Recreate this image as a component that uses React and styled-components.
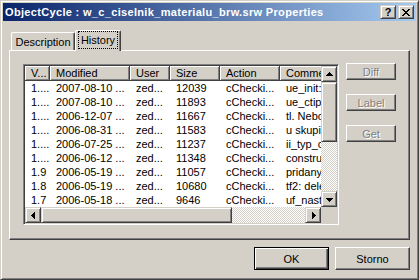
import styled, { createGlobalStyle } from "styled-components";

const GlobalStyle = createGlobalStyle`
  html, body {
    margin: 0;
    padding: 0;
    background: #d4d0c8;
  }
  body {
    font-family: "Liberation Sans", Arial, sans-serif;
    font-size: 11px;
    color: #000;
  }
`;

// classic 3d edges
const raisedScroll = `
  background: #d4d0c8;
  border: 1px solid;
  border-color: #d4d0c8 #404040 #404040 #d4d0c8;
  box-shadow: inset 1px 1px #fff, inset -1px -1px #808080;
`;

const raisedButton = `
  background: #d4d0c8;
  border: 1px solid;
  border-color: #fff #404040 #404040 #fff;
  box-shadow: inset -1px -1px #808080;
`;

const columns = [
  { title: "V...", width: 25 },
  { title: "Modified", width: 80 },
  { title: "User", width: 40 },
  { title: "Size", width: 50 },
  { title: "Action", width: 60 },
  { title: "Comment", width: 110 },
];

const rows = [
  ["1....", "2007-08-10 ...", "zed...", "12039", "cChecki...", "ue_init: zmena"],
  ["1....", "2007-08-10 ...", "zed...", "11893", "cChecki...", "ue_ctipodd"],
  ["1....", "2006-12-07 ...", "zed...", "11667", "cChecki...", "tl. Nebo..."],
  ["1....", "2006-08-31 ...", "zed...", "11583", "cChecki...", "u skupin"],
  ["1....", "2006-07-25 ...", "zed...", "11237", "cChecki...", "ii_typ_cis"],
  ["1....", "2006-06-12 ...", "zed...", "11348", "cChecki...", "constructor"],
  ["1.9", "2006-05-19 ...", "zed...", "11057", "cChecki...", "pridany..."],
  ["1.8", "2006-05-19 ...", "zed...", "10680", "cChecki...", "tf2: delete"],
  ["1.7", "2006-05-18 ...", "zed...", "9646", "cChecki...", "uf_nastav"],
];

const Window = styled.div`
  width: 419px;
  height: 280px;
  box-sizing: border-box;
  border: 1px solid;
  border-color: #d4d0c8 #404040 #404040 #d4d0c8;
  box-shadow: inset 1px 1px #fff, inset -1px -1px #808080;
  padding: 2px;
  display: flex;
  flex-direction: column;
  background: #d4d0c8;
`;

const TitleBar = styled.div`
  height: 18px;
  flex: none;
  display: flex;
  align-items: center;
  padding: 0 2px 0 2px;
  background: linear-gradient(to right, #0a246a, #a6caf0);
`;

const TitleText = styled.div`
  flex: 1;
  color: #fff;
  font-weight: bold;
  font-size: 11px;
  letter-spacing: 0.33px;
  white-space: nowrap;
  overflow: hidden;
`;

const CaptionButton = styled.div`
  ${raisedScroll}
  width: 16px;
  height: 14px;
  box-sizing: border-box;
  margin-left: 2px;
  display: flex;
  align-items: center;
  justify-content: center;
  font-weight: bold;
  font-size: 11px;
  line-height: 12px;
`;

const Body = styled.div`
  flex: 1;
  display: flex;
  flex-direction: column;
  padding: 9px 6px 0 6px;
`;

const TabStrip = styled.div`
  display: flex;
  align-items: flex-end;
  height: 20px;
  padding-left: 2px;
  position: relative;
  z-index: 1;
`;

const Tab = styled.div`
  width: ${(p) => p.$width}px;
  height: ${(p) => (p.$active ? 21 : 18)}px;
  margin-bottom: ${(p) => (p.$active ? -1 : 0)}px;
  box-sizing: border-box;
  background: #d4d0c8;
  border: 1px solid;
  border-color: #fff #404040 transparent #fff;
  border-bottom: none;
  border-radius: 2px 2px 0 0;
  box-shadow: inset -1px 0 #808080;
  display: flex;
  align-items: ${(p) => (p.$active ? "flex-start" : "center")};
  justify-content: center;
  padding-top: ${(p) => (p.$active ? 1 : 0)}px;
`;

const FocusLabel = styled.span`
  outline: 1px dotted #000;
  outline-offset: 0;
  padding: 2px 2px;
  line-height: 12px;
`;

const Panel = styled.div`
  height: 190px;
  box-sizing: border-box;
  border: 1px solid;
  border-color: #fff #404040 #404040 #fff;
  box-shadow: inset -1px -1px #808080;
  padding: 13px 0 0 13px;
  display: flex;
  gap: 7px;
`;

const ListView = styled.div`
  width: 316px;
  height: 161px;
  box-sizing: border-box;
  border: 1px solid;
  border-color: #808080 #fff #fff #808080;
  box-shadow: inset 1px 1px #404040, inset -1px -1px #d4d0c8;
  padding: 1px;
  display: grid;
  grid-template-columns: 1fr 16px;
  grid-template-rows: 1fr 16px;
`;

const Viewport = styled.div`
  background: #fff;
  overflow: hidden;
  min-width: 0;
`;

const HeaderRow = styled.div`
  display: flex;
  height: 15px;
`;

const HeaderCell = styled.div`
  flex: none;
  width: ${(p) => p.$width}px;
  box-sizing: border-box;
  background: #d4d0c8;
  border-right: 1px solid #404040;
  border-bottom: 1px solid #404040;
  box-shadow: inset 1px 1px #fff, inset -1px -1px #808080;
  padding-left: 6px;
  line-height: 14px;
  white-space: nowrap;
  overflow: hidden;
`;

const Row = styled.div`
  display: flex;
  height: 14px;
`;

const Cell = styled.div`
  flex: none;
  width: ${(p) => p.$width}px;
  box-sizing: border-box;
  padding-left: 6px;
  line-height: 14px;
  white-space: nowrap;
  overflow: hidden;
`;

const ScrollV = styled.div`
  display: flex;
  flex-direction: column;
`;

const ScrollH = styled.div`
  display: flex;
`;

const ScrollBtn = styled.div`
  ${raisedScroll}
  width: 16px;
  height: 16px;
  box-sizing: border-box;
  flex: none;
  display: flex;
  align-items: center;
  justify-content: center;
`;

const Thumb = styled.div`
  ${raisedScroll}
  box-sizing: border-box;
  flex: none;
  width: ${(p) => (p.$horizontal ? `${p.$size}px` : "16px")};
  height: ${(p) => (p.$horizontal ? "16px" : `${p.$size}px`)};
`;

const Track = styled.div`
  flex: 1;
  background: repeating-conic-gradient(#d4d0c8 0 25%, #fff 0 50%) 0 0 / 2px 2px;
`;

const Corner = styled.div`
  background: #d4d0c8;
`;

const SideButtons = styled.div`
  display: flex;
  flex-direction: column;
  gap: 14px;
  margin-top: -1px;
`;

const SideButton = styled.div`
  ${raisedButton}
  width: 50px;
  height: 17px;
  box-sizing: border-box;
  display: flex;
  align-items: center;
  justify-content: center;
  color: #808080;
  text-shadow: 1px 1px 0 #fff;
`;

const Footer = styled.div`
  display: flex;
  justify-content: flex-end;
  gap: 6px;
  margin-top: 7px;
`;

const DialogButton = styled.div`
  width: 75px;
  height: 23px;
  box-sizing: border-box;
  background: #d4d0c8;
  display: flex;
  align-items: center;
  justify-content: center;
  ${(p) =>
    p.$default
      ? `border: 1px solid #000;
         box-shadow: inset 1px 1px #fff, inset -1px -1px #404040, inset -2px -2px #808080;`
      : raisedButton}
`;

function Arrow({ dir }) {
  const rot = { up: 0, right: 90, down: 180, left: 270 }[dir];
  return (
    <svg
      width="7"
      height="7"
      viewBox="0 0 7 7"
      shapeRendering="crispEdges"
      style={{ transform: `rotate(${rot}deg)` }}
    >
      <path d="M3 1h1v1h1v1h1v1h1v1H0V4h1V3h1V2h1z" fill="#000" />
    </svg>
  );
}

function CloseGlyph() {
  const cells = [
    [0, 0, 2], [6, 0, 2],
    [1, 1, 2], [5, 1, 2],
    [2, 2, 4],
    [3, 3, 2],
    [2, 4, 4],
    [1, 5, 2], [5, 5, 2],
    [0, 6, 2], [6, 6, 2],
  ];
  return (
    <svg width="8" height="7" viewBox="0 0 8 7" shapeRendering="crispEdges">
      {cells.map(([x, y, w], i) => (
        <rect key={i} x={x} y={y} width={w} height="1" fill="#000" />
      ))}
    </svg>
  );
}

export default function App() {
  return (
    <>
      <GlobalStyle />
      <Window>
        <TitleBar>
          <TitleText>ObjectCycle : w_c_ciselnik_materialu_brw.srw Properties</TitleText>
          <CaptionButton>?</CaptionButton>
          <CaptionButton>
            <CloseGlyph />
          </CaptionButton>
        </TitleBar>
        <Body>
          <TabStrip>
            <Tab $width={64}>Description</Tab>
            <Tab $width={46} $active>
              <FocusLabel>History</FocusLabel>
            </Tab>
          </TabStrip>
          <Panel>
            <ListView>
              <Viewport>
                <HeaderRow>
                  {columns.map((c) => (
                    <HeaderCell key={c.title} $width={c.width}>
                      {c.title}
                    </HeaderCell>
                  ))}
                </HeaderRow>
                {rows.map((r, i) => (
                  <Row key={i}>
                    {r.map((v, j) => (
                      <Cell key={j} $width={columns[j].width}>
                        {v}
                      </Cell>
                    ))}
                  </Row>
                ))}
              </Viewport>
              <ScrollV>
                <ScrollBtn>
                  <Arrow dir="up" />
                </ScrollBtn>
                <Thumb $size={60} />
                <Track />
                <ScrollBtn>
                  <Arrow dir="down" />
                </ScrollBtn>
              </ScrollV>
              <ScrollH>
                <ScrollBtn>
                  <Arrow dir="left" />
                </ScrollBtn>
                <Thumb $horizontal $size={191} />
                <Track />
                <ScrollBtn>
                  <Arrow dir="right" />
                </ScrollBtn>
              </ScrollH>
              <Corner />
            </ListView>
            <SideButtons>
              <SideButton>Diff</SideButton>
              <SideButton>Label</SideButton>
              <SideButton>Get</SideButton>
            </SideButtons>
          </Panel>
          <Footer>
            <DialogButton $default>OK</DialogButton>
            <DialogButton>Storno</DialogButton>
          </Footer>
        </Body>
      </Window>
    </>
  );
}
